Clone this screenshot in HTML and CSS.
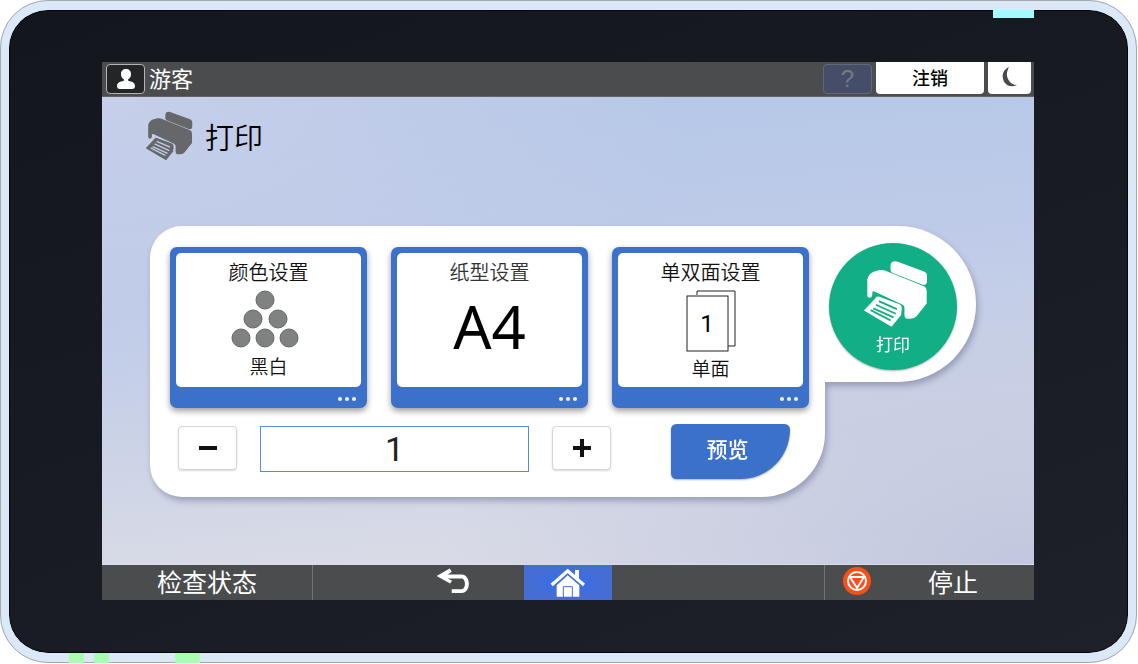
FILE: index.html
```html
<!DOCTYPE html>
<html lang="zh-CN">
<head>
<meta charset="utf-8">
<meta name="viewport" content="width=device-width, initial-scale=1">
<title>打印</title>
<link rel="stylesheet" href="styles.css">
</head>
<body>

<svg class="defs" aria-hidden="true">
  <symbol id="printer" viewBox="190 135 196 204">
    <path d="M273 150Q274 138 287 138Q291 138 295 140L374 169Q383 173 383 180V199Q382 211 370 209L278 173Q273 170 273 164Z"/>
    <path d="M203 240V194Q205 178 222 170L240 165Q250 163 258 167L374 214Q382 218 382 228V266L352 303Q344 312 332 312H323Q315 310 315 302V278Q315 272 308 269L226 230Q218 226 218 233V240Q217 248 210 248Q203 248 203 240Z"/>
    <path fill-rule="evenodd" d="M228 249Q231 243 239 245L300 268Q308 272 307 281L305 300L276 336L193 287ZM239 256L237 261L291 285L293 280ZM230 267L228 272L288 299L290 294ZM222 278L220 283L281 310L283 305ZM214 283L212 288L272 319L274 314Z"/>
  </symbol>
</svg>

<div class="device">
  <span class="light"></span>

  <div class="screen">
    <header class="topbar">
      <span class="user-icon">
        <svg viewBox="0 0 20 20" width="20" height="20"><path d="M10 0C7 0 5 2 5 5C5 8 6 9 8 10.500C8 12 7 12 5 12.500C2 13.500 1 15 1 17C1 19 2 20 4 20H16C18 20 19 19 19 17C19 15 18 13.500 15 12.500C13 12 12 12 12 10.500C14 9 15 8 15 5C15 2 13 0 10 0Z"/></svg>
      </span>
      <span class="user-name">游客</span>
      <button class="help" disabled>?</button>
      <button class="logout">注销</button>
      <button class="sleep" aria-label="睡眠">
        <svg viewBox="0 0 16 20" width="16" height="20"><path d="M7 0C0 3 -1 11 3 16C6 20 11 20 15 18C11 18 8 16 6 12C4 8 5 4 7 0Z"/></svg>
      </button>
    </header>

    <main class="content">
      <h1 class="page-title"><svg class="title-icon"><use href="#printer"/></svg>打印</h1>

      <div class="panel">
        <div class="panel-main">
          <div class="cards">
            <button class="card">
              <span class="card-face">
                <span class="card-title">颜色设置</span>
                <svg class="dots" viewBox="0 0 76 58" width="76" height="58">
                  <circle cx="34" cy="10" r="9"/>
                  <circle cx="22" cy="29" r="9"/><circle cx="47" cy="29" r="9"/>
                  <circle cx="10" cy="48" r="9"/><circle cx="34" cy="48" r="9"/><circle cx="58" cy="48" r="9"/>
                </svg>
                <span class="card-value">黑白</span>
              </span>
              <svg class="more" viewBox="0 0 18 4" width="18" height="4"><circle cx="2" cy="2" r="2"/><circle cx="9" cy="2" r="2"/><circle cx="16" cy="2" r="2"/></svg>
            </button>
            <button class="card">
              <span class="card-face">
                <span class="card-title soft">纸型设置</span>
                <span class="paper-size">A4</span>
              </span>
              <svg class="more" viewBox="0 0 18 4" width="18" height="4"><circle cx="2" cy="2" r="2"/><circle cx="9" cy="2" r="2"/><circle cx="16" cy="2" r="2"/></svg>
            </button>
            <button class="card">
              <span class="card-face">
                <span class="card-title">单双面设置</span>
                <svg class="sheets" viewBox="0 0 50 62" width="50" height="62">
                  <path d="M11 5V1H49V56H42"/><rect x="1" y="6" width="41" height="55"/>
                  <text x="21" y="42" text-anchor="middle">1</text>
                </svg>
                <span class="card-value">单面</span>
              </span>
              <svg class="more" viewBox="0 0 18 4" width="18" height="4"><circle cx="2" cy="2" r="2"/><circle cx="9" cy="2" r="2"/><circle cx="16" cy="2" r="2"/></svg>
            </button>
          </div>

          <div class="actions">
            <div class="stepper">
              <button class="step" id="minus" aria-label="减少"><svg viewBox="0 0 20 20" width="20" height="20"><path d="M1 10H19"/></svg></button>
              <input class="copies" id="copies" type="text" value="1" aria-label="份数">
              <button class="step" id="plus" aria-label="增加"><svg viewBox="0 0 20 20" width="20" height="20"><path d="M1 10H19M10 1V19"/></svg></button>
            </div>
            <button class="preview">预览</button>
          </div>
        </div>

        <div class="panel-side">
          <button class="print"><svg class="print-icon"><use href="#printer"/></svg>打印</button>
        </div>
      </div>
    </main>

    <nav class="bottombar">
      <button class="nav status">检查状态</button>
      <button class="nav back" aria-label="返回">
        <svg viewBox="104 56 104 78" width="34" height="26" fill="#fff"><path d="M106 80L146 57L152 67L140 75H182C212 75 212 132 182 132H152V120H182C196 120 196 87 182 87H140L153 94L147 103Z"/></svg>
      </button>
      <button class="nav home" aria-label="主页">
        <svg viewBox="452 54 108 90" width="36" height="30">
          <path fill="#fff" d="M527 60H539V90L527 80ZM505 76L540 106V140H472V106Z"/>
          <path fill="none" stroke="#fff" stroke-width="10" d="M457 105L505 63L554 105"/>
          <path fill="none" stroke="#466dd3" stroke-width="3" d="M464 108L505 73L547 108M492 141V110H519V141"/>
        </svg>
      </button>
      <span class="nav"></span>
      <button class="nav stop">
        <svg viewBox="0 0 28 28" width="28" height="28"><circle cx="14" cy="14" r="14" fill="#fa4f16"/><g fill="none" stroke="#fff" stroke-width="2"><circle cx="14" cy="14" r="9"/><path d="M7 10H21L14 21Z"/></g></svg>
        停止
      </button>
    </nav>
  </div>

  <span class="led led-1"></span>
  <span class="led led-2"></span>
  <span class="led led-3"></span>
</div>

<script>
var copies = document.getElementById('copies');

function step(n) {
  copies.value = Math.max(1, (parseInt(copies.value, 10) || 1) + n);
}

document.getElementById('minus').onclick = function() { step(-1); };
document.getElementById('plus').onclick = function() { step(1); };
</script>

</body>
</html>
```
FILE: styles.css
```css
* {
  box-sizing: border-box;
}

body {
  margin: 0;
  background: #fff;
  font-family: "Noto Sans CJK SC", sans-serif;
}

button {
  margin: 0;
  padding: 0;
  border: none;
  background: none;
  color: inherit;
  font: inherit;
  cursor: pointer;
}

svg {
  display: block;
  flex: none;
}

.defs {
  position: absolute;
  width: 0;
  height: 0;
}

/* device frame */
.device {
  position: relative;
  display: flex;
  min-height: calc(100vh - 1px);
  margin-right: 1px;
  padding: 52px 94px 53px 93px;
  border: 9px solid #dae8f8;
  border-width: 10px 9px;
  border-radius: 48px;
  background: linear-gradient(160deg, #13161c, #191c24 60%, #1e2129);
  background-clip: padding-box;
  box-shadow: inset 0 0 0 1px #05070a;
  outline: 1px solid #a5a8ac;
  outline-offset: -1px;
}

.light {
  position: absolute;
  top: 0;
  right: 94px;
  width: 41px;
  height: 8px;
  background: #a0fbfd;
}

.led {
  position: absolute;
  bottom: -10px;
  width: 15px;
  height: 10px;
  background: #a9fdb0;
}

.led-1 {
  left: 60px;
}

.led-2 {
  left: 85px;
}

.led-3 {
  left: 166px;
  width: 25px;
}

.screen {
  flex: 1;
  display: flex;
  flex-direction: column;
  min-width: 0;
}

/* top bar */
.topbar {
  display: flex;
  align-items: flex-start;
  gap: 4px;
  height: 35px;
  padding: 0 3px 0 4px;
  background: #4b4c4d;
  border-bottom: 1px solid #626468;
  color: #fff;
}

.user-icon {
  display: flex;
  align-items: center;
  justify-content: center;
  width: 39px;
  height: 30px;
  margin-top: 2px;
  border: 1px solid #b4b4b4;
  border-radius: 4px;
  background: #242526;
  fill: #fff;
}

.user-name {
  flex: 1;
  font-size: 22px;
  line-height: 30px;
}

.help {
  width: 49px;
  height: 30px;
  margin-top: 2px;
  border: 1px solid #62677a;
  border-radius: 4px;
  background: #454d68;
  color: #777a84;
  font-family: "Liberation Sans", sans-serif;
  font-size: 24px;
  line-height: 28px;
}

.logout,
.sleep {
  display: flex;
  align-items: center;
  justify-content: center;
  height: 32px;
  padding-bottom: 2px;
  border-radius: 0 0 4px 4px;
  background: #fff;
  color: #000;
}

.logout {
  width: 108px;
  font-size: 18px;
  font-weight: 500;
}

.sleep {
  width: 43px;
  fill: #484a4d;
}

/* content */
.content {
  flex: 1;
  padding: 14px 58px 64px 48px;
  background:
    radial-gradient(ellipse at 100% 100%, #c1c7df, transparent 45%),
    radial-gradient(ellipse at 0 0, #c7cfe9, transparent 45%),
    linear-gradient(175deg, #b4c7e8, #bfcbe8 40%, #d7dae6 85%, #dddbe5);
}

.page-title {
  display: flex;
  align-items: center;
  gap: 12px;
  height: 50px;
  margin: 0 0 65px -5px;
  color: #000;
  font-size: 29px;
  font-weight: 350;
  line-height: 46px;
}

.title-icon {
  width: 48px;
  height: 50px;
  fill: #66676a;
}

.panel {
  display: flex;
  align-items: flex-start;
  filter: drop-shadow(2px 4px 3px rgba(90, 95, 130, 0.45));
}

.panel-main {
  flex: 1;
  min-width: 0;
  padding: 21px 16px 18px 20px;
  border-radius: 32px 0 64px 32px;
  background: #fff;
}

.panel-side {
  width: 151px;
  padding: 17px 19px 12px 4px;
  border-radius: 0 78px 78px 0;
  background: #fff;
}

/* setting cards */
.cards {
  display: grid;
  grid-template-columns: repeat(3, 1fr);
  gap: 24px;
}

.card {
  display: flex;
  flex-direction: column;
  height: 161px;
  padding: 6px;
  border-radius: 7px;
  background: #3b71ca;
  box-shadow: 0 3px 6px rgba(0, 0, 0, 0.4);
  color: #111;
}

.card-face {
  display: flex;
  flex-direction: column;
  align-items: center;
  width: 100%;
  height: 134px;
  padding-top: 6px;
  border-radius: 5px;
  background: #fff;
}

.card-title {
  font-size: 20px;
  font-weight: 350;
  line-height: 26px;
}

.soft {
  color: #333;
}

.card-value {
  font-size: 19px;
  font-weight: 350;
  line-height: 30px;
}

.dots {
  margin: 5px 0 3px;
  fill: #808281;
  stroke: #666;
}

.sheets {
  margin: 5px 0 1px;
  fill: #fff;
  stroke: #222;
}

.sheets text {
  fill: #000;
  stroke: none;
  font-family: Roboto, sans-serif;
  font-size: 24px;
}

.paper-size {
  color: #000;
  font-family: "Noto Sans", sans-serif;
  font-size: 60px;
  line-height: 82px;
}

.more {
  align-self: flex-end;
  margin: 10px 5px 0 0;
  fill: #f0f2f6;
}

/* copies and preview */
.actions {
  display: flex;
  align-items: flex-start;
  gap: 60px;
  margin-top: 16px;
  padding: 0 19px 0 8px;
}

.stepper {
  flex: 1;
  display: flex;
  gap: 23px;
  min-width: 0;
  padding-top: 2px;
}

.step {
  display: flex;
  align-items: center;
  justify-content: center;
  width: 59px;
  height: 44px;
  border: 1px solid #d6d6d6;
  border-radius: 4px;
  background: #fff;
  box-shadow: 0 1px 2px rgba(0, 0, 0, 0.15);
  stroke: #111;
  stroke-width: 4;
}

.copies {
  flex: 1;
  min-width: 0;
  height: 46px;
  padding: 0;
  border: 1px solid #5a8bd8;
  background: #fff;
  color: #222;
  font-family: Roboto, sans-serif;
  font-size: 34px;
  text-align: center;
}

.preview {
  width: 119px;
  height: 55px;
  padding: 0 6px 8px 0;
  border-radius: 6px 6px 55px 6px;
  background: #3b71ca;
  box-shadow: 0 1px 2px rgba(0, 0, 0, 0.3);
  color: #fff;
  font-size: 21px;
  font-weight: 500;
}

.print {
  display: flex;
  flex-direction: column;
  align-items: center;
  width: 128px;
  height: 127px;
  padding-top: 17px;
  border-radius: 50%;
  background: #12ae85;
  box-shadow: 0 1px 2px rgba(0, 0, 0, 0.3);
  color: #fff;
  font-size: 17px;
  line-height: 32px;
}

.print-icon {
  width: 65px;
  height: 68px;
  margin-left: 5px;
  fill: #fff;
}

/* bottom bar */
.bottombar {
  display: grid;
  grid-template-columns: 211fr 211fr 88fr 212fr 210fr;
  height: 36px;
  border-top: 1px solid #d8dbe4;
  background: #4b4c4d;
  color: #fff;
  font-size: 25px;
}

.nav {
  display: flex;
  align-items: center;
  justify-content: center;
  height: 35px;
  padding-bottom: 3px;
  line-height: 32px;
}

.status {
  border-right: 1px solid #717375;
}

.back {
  padding-left: 68px;
}

.home {
  padding-bottom: 0;
  background: radial-gradient(#2f6ff5, #466dd3 60%);
}

.stop {
  justify-content: flex-start;
  gap: 57px;
  padding-left: 18px;
  border-left: 1px solid #717375;
}
```
